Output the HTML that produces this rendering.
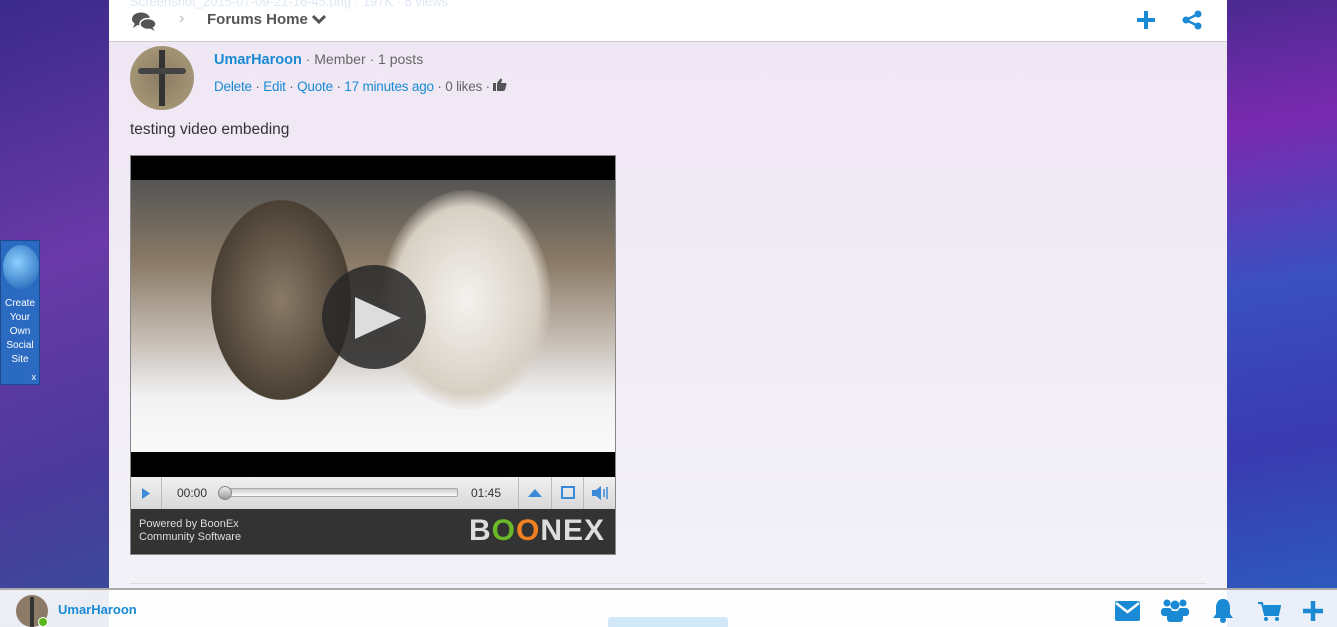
<!DOCTYPE html>
<html><head><meta charset="utf-8"><style>
*{margin:0;padding:0;box-sizing:border-box}
html,body{width:1337px;height:627px;overflow:hidden}
body{position:relative;font-family:"Liberation Sans",sans-serif;
background:linear-gradient(160deg,#3a2a8a 0%,#6a3aa8 25%,#4a3a9a 45%,#2a5a9a 70%,#2a7a9a 100%);}
.right{position:absolute;left:1227px;top:0;width:110px;height:627px;background:linear-gradient(170deg,#4a2a90 0%,#7a2ab0 20%,#3a50c0 45%,#3a3ab0 70%,#2a60c0 100%)}
.panel{position:absolute;left:109px;top:0;width:1118px;height:627px;background:linear-gradient(180deg,#efe6f4 0%,#f1ecf6 50%,#f2f2f8 100%)}
.top{position:absolute;left:109px;top:0;width:1118px;height:42px;background:#fff;border-bottom:1px solid #ccc}
.blue{color:#1a8ad4}
.grey{color:#666}
.bottom{position:absolute;left:0;top:588px;width:1337px;height:45px;background:rgba(255,255,255,.9);border-top:2px solid #aaa}
</style></head><body>
<div class="right"></div>
<div class="panel"></div>
<div class="top">
 <div style="position:absolute;left:21px;top:-6px;font-size:13px;color:#dde8f4">Screenshot_2015-07-09-21-16-45.png · 197K · 8 views</div>
 <svg style="position:absolute;left:22px;top:11px" width="26" height="22" viewBox="0 0 26 22"><ellipse cx="10" cy="8" rx="9" ry="6.5" fill="#555"/><path d="M4 12 L2 17 L8 13Z" fill="#555"/><ellipse cx="17" cy="13" rx="8" ry="5.5" fill="#555" stroke="#fff" stroke-width="1.5"/><path d="M21 16 L24 20 L18 17Z" fill="#555"/></svg>
 <div style="position:absolute;left:70px;top:10px;color:#bbb;font-size:16px">›</div>
 <div style="position:absolute;left:98px;top:11px;font-size:15px;font-weight:bold;color:#555">Forums Home <svg width="14" height="10" viewBox="0 0 14 10"><path d="M1 2 L7 8 L13 2" stroke="#555" stroke-width="3" fill="none"/></svg></div>
 <svg style="position:absolute;left:1027px;top:10px" width="20" height="20"><path d="M10 1v18M1 10h18" stroke="#1a8ad4" stroke-width="4"/></svg>
 <svg style="position:absolute;left:1072px;top:10px" width="22" height="20" viewBox="0 0 22 20"><circle cx="17" cy="4" r="3.5" fill="#1a8ad4"/><circle cx="5" cy="10" r="3.5" fill="#1a8ad4"/><circle cx="17" cy="16" r="3.5" fill="#1a8ad4"/><path d="M17 4L5 10L17 16" stroke="#1a8ad4" stroke-width="2.5" fill="none"/></svg>
</div>
<div style="position:absolute;left:130px;top:46px;width:64px;height:64px;border-radius:50%;background:radial-gradient(circle,#8a7a60,#b0a080);overflow:hidden"><div style="position:absolute;left:29px;top:4px;width:6px;height:56px;background:#333"></div><div style="position:absolute;left:8px;top:22px;width:48px;height:6px;background:#444;border-radius:3px"></div></div>
<div style="position:absolute;left:214px;top:51px;font-size:14.5px"><b class="blue">UmarHaroon</b><span class="grey" style="font-size:14px"> · Member · 1 posts</span></div>
<div style="position:absolute;left:214px;top:78px;font-size:13.5px;letter-spacing:-0.2px"><span class="blue">Delete</span><span class="grey"> · </span><span class="blue">Edit</span><span class="grey"> · </span><span class="blue">Quote</span><span class="grey"> · </span><span class="blue">17 minutes ago</span><span class="grey"> · 0 likes · </span><svg width="14" height="13" viewBox="0 0 14 13"><rect x="0" y="5" width="3" height="8" fill="#555"/><path d="M4 5L7 1Q9 0 9 2L8 5H13Q14 6 13 8L12 12Q11 13 10 13H4Z" fill="#555"/></svg></div>
<div style="position:absolute;left:130px;top:121px;font-size:15.5px;color:#333">testing video embeding</div>
<div style="position:absolute;left:130px;top:155px;width:486px;height:400px;border:1px solid #888;background:#000">
 <div style="position:absolute;left:0;top:24px;width:484px;height:272px;background:linear-gradient(180deg,#555 0%,#8a7a66 30%,#c8c0b8 60%,#f2f2f4 80%,#fafafa 100%)">
  <div style="position:absolute;left:80px;top:20px;width:140px;height:200px;border-radius:50%;background:radial-gradient(ellipse,#8a7a68,#4a4034 70%,transparent 72%)"></div>
  <div style="position:absolute;left:250px;top:10px;width:170px;height:220px;border-radius:50%;background:radial-gradient(ellipse,#f4f2ee,#d8d0c4 60%,transparent 72%)"></div>
  <div style="position:absolute;left:191px;top:85px;width:104px;height:104px;border-radius:50%;background:rgba(40,40,40,.85)"></div>
  <svg style="position:absolute;left:222px;top:115px" width="50" height="46"><path d="M2 2 L48 23 L2 44Z" fill="#ddd"/></svg>
 </div>
 <div style="position:absolute;left:0;top:321px;width:484px;height:32px;background:linear-gradient(#f0f0f0,#d8d8d8);font-size:12px;color:#333">
  <svg style="position:absolute;left:10px;top:10px" width="10" height="13"><path d="M1 1L9 6.5L1 12Z" fill="#3a8ad8"/></svg>
  <div style="position:absolute;left:30px;top:0;width:1px;height:32px;background:#bbb"></div>
  <div style="position:absolute;left:46px;top:9px">00:00</div>
  <div style="position:absolute;left:90px;top:11px;width:237px;height:9px;border:1px solid #aaa;background:linear-gradient(#ccc,#fff);border-radius:2px"></div>
  <div style="position:absolute;left:87px;top:9px;width:14px;height:14px;border-radius:50%;background:linear-gradient(#eee,#999);border:1px solid #888"></div>
  <div style="position:absolute;left:340px;top:9px">01:45</div>
  <div style="position:absolute;left:387px;top:0;width:1px;height:32px;background:#bbb"></div>
  <svg style="position:absolute;left:397px;top:12px" width="14" height="8"><path d="M0 8L7 0L14 8Z" fill="#3a8ad8"/></svg>
  <div style="position:absolute;left:420px;top:0;width:1px;height:32px;background:#bbb"></div>
  <div style="position:absolute;left:430px;top:9px;width:14px;height:13px;border:2px solid #3a8ad8"></div>
  <div style="position:absolute;left:452px;top:0;width:1px;height:32px;background:#bbb"></div>
  <svg style="position:absolute;left:460px;top:9px" width="18" height="14"><path d="M1 4h4l5-4v14l-5-4H1Z" fill="#3a8ad8"/><path d="M13 3v8M16 1v12" stroke="#3a8ad8" stroke-width="1.5"/></svg>
 </div>
 <div style="position:absolute;left:0;top:353px;width:484px;height:45px;background:#333;color:#ddd;font-size:11px;line-height:13px;padding:9px 8px">Powered by BoonEx<br>Community Software
  <div style="position:absolute;right:10px;top:5px;font-size:30px;line-height:34px;font-weight:bold;color:#ddd;letter-spacing:1px">B<span style="color:#6ab82a">O</span><span style="color:#f08020">O</span>NEX</div>
 </div>
</div>
<div style="position:absolute;left:130px;top:583px;width:1076px;height:1px;background:#ddd"></div>
<div style="position:absolute;left:0;top:240px;width:40px;height:145px;background:#2a6ac0;border:1px solid #1a4a90;color:#fff;font-size:10px;text-align:center;line-height:14px;padding-top:56px">
 <div style="position:absolute;left:2px;top:4px;width:36px;height:44px;border-radius:50%;background:radial-gradient(circle at 40% 40%,#8ad0ff,#1a5ab0)"></div>
 Create<br>Your<br>Own<br>Social<br>Site
 <div style="position:absolute;right:3px;bottom:0;font-size:9px">x</div>
</div>
<div class="bottom">
 <div style="position:absolute;left:16px;top:5px;width:32px;height:32px;border-radius:50%;background:#8a7a66;overflow:hidden"><div style="position:absolute;left:14px;top:2px;width:4px;height:30px;background:#333"></div></div>
 <div style="position:absolute;left:38px;top:27px;width:10px;height:10px;border-radius:50%;background:#5ab81a;border:1px solid #fff"></div>
 <div style="position:absolute;left:58px;top:12px;font-size:13px;font-weight:bold;color:#1a8ad4">UmarHaroon</div>
 <div style="position:absolute;left:608px;top:27px;width:120px;height:12px;background:#d0e8f8;border-radius:3px"></div>
 <svg style="position:absolute;left:1115px;top:11px" width="25" height="20"><rect x="0" y="0" width="25" height="20" rx="2" fill="#1a8ad4"/><path d="M1 2L12.5 11L24 2" stroke="#fff" stroke-width="2.5" fill="none"/></svg>
 <svg style="position:absolute;left:1161px;top:8px" width="28" height="25" viewBox="0 0 28 25"><circle cx="6" cy="5" r="3.5" fill="#1a8ad4"/><circle cx="22" cy="5" r="3.5" fill="#1a8ad4"/><circle cx="14" cy="7" r="4.5" fill="#1a8ad4"/><rect x="0" y="10" width="11" height="8" rx="3" fill="#1a8ad4"/><rect x="17" y="10" width="11" height="8" rx="3" fill="#1a8ad4"/><rect x="6" y="13" width="16" height="11" rx="3" fill="#1a8ad4"/></svg>
 <svg style="position:absolute;left:1212px;top:8px" width="22" height="26" viewBox="0 0 22 26"><path d="M11 1C6 1 4 5 4 10V16L1 20H21L18 16V10C18 5 16 1 11 1Z" fill="#1a8ad4"/><circle cx="11" cy="22" r="3" fill="#1a8ad4"/></svg>
 <svg style="position:absolute;left:1258px;top:12px" width="23" height="20" viewBox="0 0 23 20"><path d="M0 1H4L7 13H20L22 4H6" fill="#1a8ad4" stroke="#1a8ad4" stroke-width="2"/><circle cx="8" cy="17" r="2" fill="#1a8ad4"/><circle cx="19" cy="17" r="2" fill="#1a8ad4"/></svg>
 <svg style="position:absolute;left:1303px;top:11px" width="20" height="20"><path d="M10 0v20M0 10h20" stroke="#1a8ad4" stroke-width="4.5"/></svg>
</div>
</body></html>
